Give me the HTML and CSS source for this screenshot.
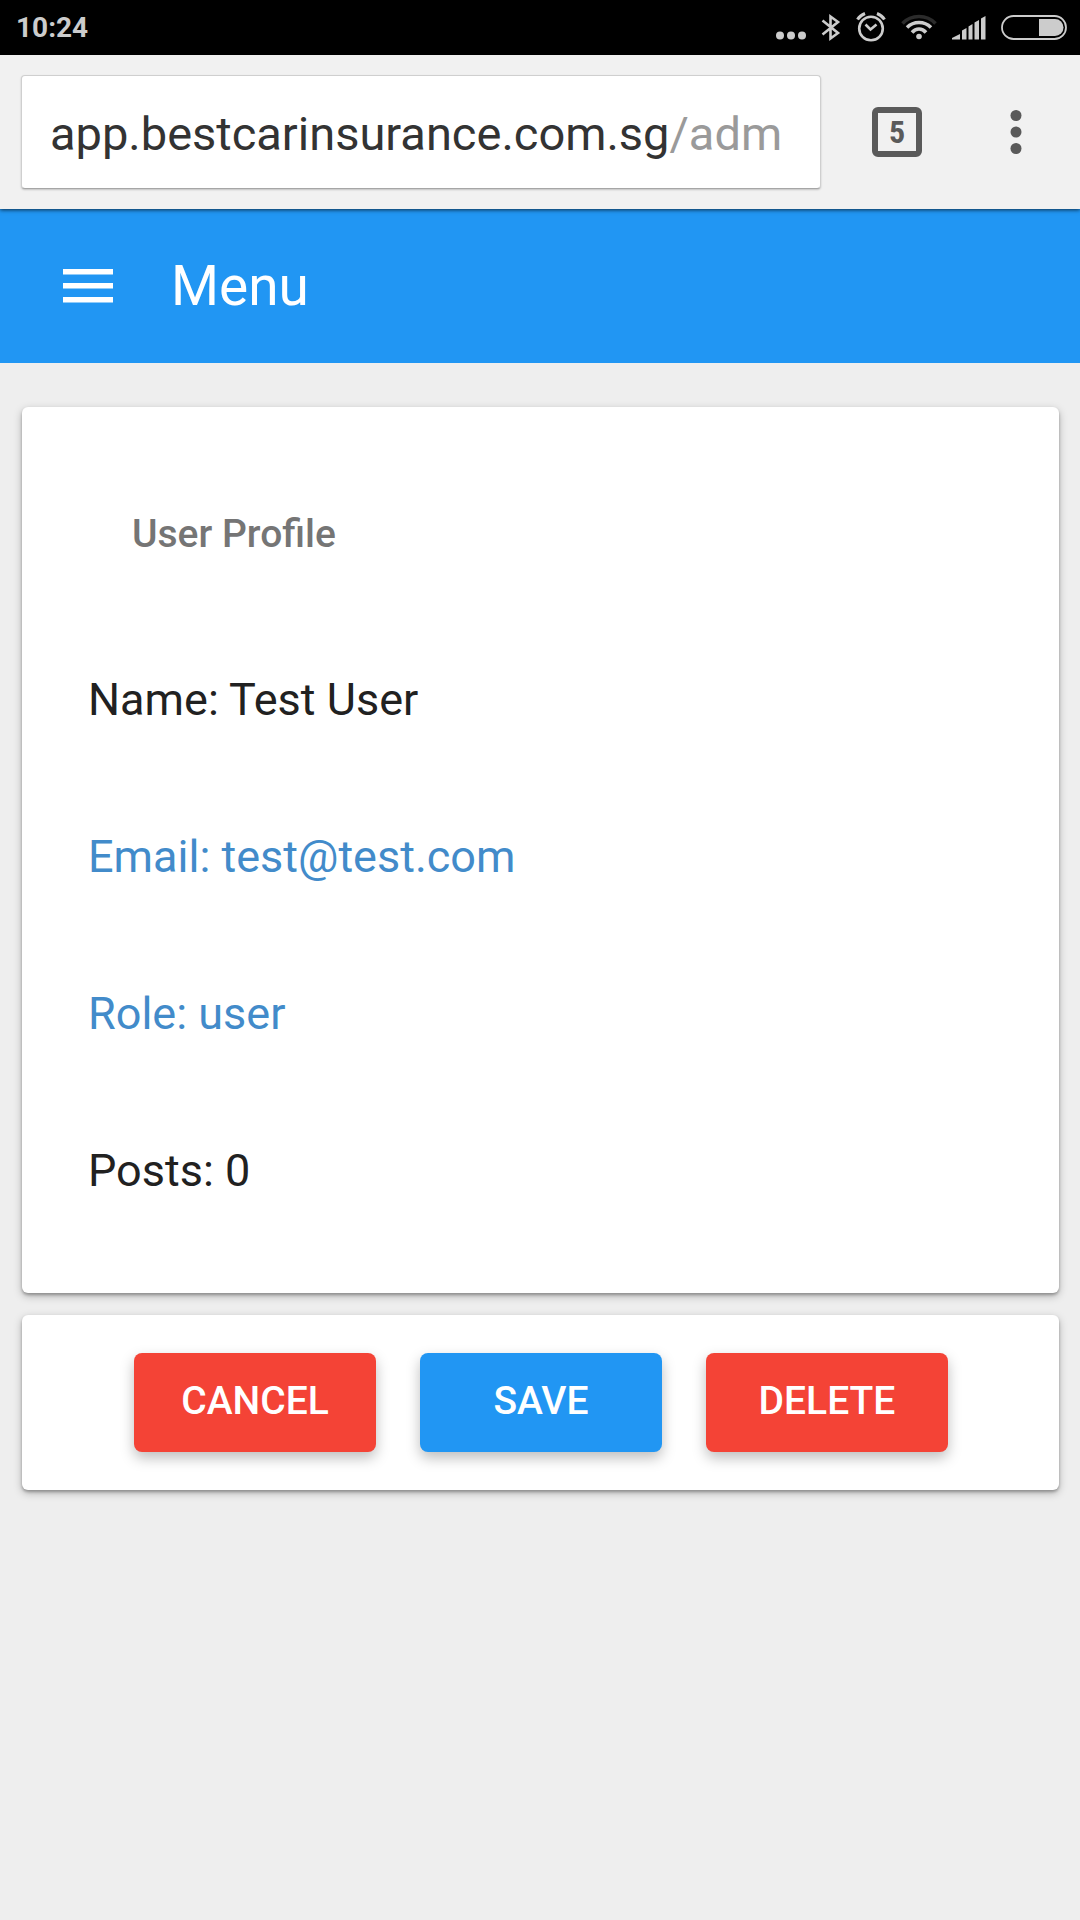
FILE: index.html
```html
<!DOCTYPE html>
<html lang="en">
<head>
<meta charset="utf-8">
<meta name="viewport" content="width=device-width, initial-scale=1">
<title>User Profile</title>
<link rel="stylesheet" href="styles.css">
</head>
<body>
<div class="status">
  <time class="clock">10:24</time>
  <div class="status-icons">
    <svg width="30" height="55" viewBox="0 0 30 55" fill="currentColor" aria-hidden="true"><circle cx="4" cy="35.5" r="4"/><circle cx="15" cy="35.5" r="4"/><circle cx="26" cy="35.5" r="4"/></svg>
    <svg width="20" height="55" viewBox="0 0 20 55" fill="none" stroke="currentColor" stroke-width="2.6" aria-hidden="true"><path d="M1.5 20.500 17 33 9.500 38.500V16.500L17 22 1.500 34.500"/></svg>
    <svg width="30" height="55" viewBox="0 0 30 55" fill="none" stroke="currentColor" aria-hidden="true"><circle cx="15" cy="28.500" r="11.800" stroke-width="2.600"/><path stroke-width="2.600" d="M9.500 24.500 14.500 29.500 20.500 24.500"/><path stroke-width="3" d="M1.500 19.500Q4 15.500 9 13.500M28.500 19.500Q26 15.500 21 13.500"/></svg>
    <svg width="36" height="55" viewBox="0 0 36 55" fill="none" stroke="currentColor" stroke-width="3.500" aria-hidden="true"><path stroke="#2b2b2b" d="M1.500 23.500Q8 16.500 18 16.500T34.500 23.500"/><path d="M6 27.500Q11 22.500 18 22.500T30 27.500M11 32.500Q14 29 18 29T25 32.500"/><circle cx="18" cy="36.500" r="2.800" fill="currentColor" stroke="none"/></svg>
    <svg width="34" height="55" viewBox="0 0 34 55" fill="currentColor" aria-hidden="true"><path d="M0 39.500V38L8 34V39.500ZM10 39.500V30.500L14.500 28V39.500ZM16.500 39.500V26.500L20.500 24V39.500ZM22.500 39.500V22.500L27 20V39.500ZM29 39.500V18.500L33.500 16V39.500Z"/></svg>
    <svg width="66" height="55" viewBox="0 0 66 55" aria-hidden="true"><rect x="1" y="16" width="64" height="23" rx="11.500" fill="none" stroke="currentColor" stroke-width="1.800"/><path fill="currentColor" d="M38 19H54A8.500 8.500 0 0 1 54 36H38Z"/></svg>
  </div>
</div>

<div class="browser-bar">
  <label class="address">
    <input class="host" type="text" aria-label="Address" value="app.bestcarinsurance.com.sg"><span class="path">/adm</span>
  </label>
  <div class="browser-actions">
    <button class="tabs" type="button" aria-label="Open tabs">5</button>
    <button class="more" type="button" aria-label="More options">
      <svg width="12" height="44" viewBox="0 0 12 44" fill="currentColor"><circle cx="6" cy="5.500" r="5.500"/><circle cx="6" cy="22" r="5.500"/><circle cx="6" cy="38.500" r="5.500"/></svg>
    </button>
  </div>
</div>

<header class="toolbar">
  <button class="menu-button" type="button" aria-label="Toggle menu">
    <svg width="50" height="34" viewBox="0 0 50 34" fill="currentColor"><path d="M0 0H50V5.500H0ZM0 14H50V19.500H0ZM0 28H50V33.500H0Z"/></svg>
  </button>
  <h1 class="toolbar-title">Menu</h1>
</header>

<main class="content">
  <section class="card profile">
    <h2 class="subheader">User Profile</h2>
    <ul class="list">
      <li class="item">Name: Test User</li>
      <li class="item"><a class="link" href="#email">Email: test@test.com</a></li>
      <li class="item"><a class="link" href="#role">Role: user</a></li>
      <li class="item">Posts: 0</li>
    </ul>
  </section>
  <section class="card actions">
    <button class="btn warn" type="button">CANCEL</button>
    <button class="btn primary" type="button">SAVE</button>
    <button class="btn warn" type="button">DELETE</button>
  </section>
</main>
</body>
</html>
```
FILE: styles.css
```css
* {
  box-sizing: border-box;
}

body {
  margin: 0;
  min-height: 100vh;
  background: #eeeeee;
  color: #212121;
  font-family: Roboto, "Liberation Sans", sans-serif;
}

button,
input {
  margin: 0;
  padding: 0;
  border: 0;
  background: none;
  color: inherit;
  font: inherit;
}

svg {
  display: block;
}

/* Phone status bar */
.status {
  display: flex;
  align-items: center;
  justify-content: space-between;
  height: 55px;
  padding: 0 13px 0 16px;
  background: #000;
  color: #cccccc;
}

.clock {
  font-size: 28px;
  font-weight: 700;
}

.status-icons {
  display: flex;
  gap: 15px;
}

/* Browser address bar */
.browser-bar {
  position: relative;
  display: flex;
  align-items: center;
  height: 154px;
  padding: 0 58px 0 21px;
  background: #f1f1f1;
  box-shadow: 0 1px 4px rgba(0, 0, 0, 0.7);
}

.address {
  display: flex;
  flex: 1;
  align-items: center;
  height: 114px;
  padding: 2px 28px 0;
  overflow: hidden;
  border: 1px solid #cfcfcf;
  border-bottom-color: #a6a6a6;
  border-radius: 4px;
  background: #fff;
  box-shadow: 0 1px 2px rgba(0, 0, 0, 0.2);
  font-size: 47px;
}

.host {
  field-sizing: content;
  color: #333333;
}

.path {
  color: #9a9a9a;
}

.browser-actions {
  display: flex;
  align-items: center;
  gap: 88px;
  margin-left: 51px;
  color: #5a5a5a;
}

.tabs {
  width: 50px;
  height: 50px;
  border: 6px solid;
  border-radius: 6px;
  font-family: "Roboto Condensed", Roboto, sans-serif;
  font-size: 32px;
  font-weight: 700;
  line-height: 38px;
}

/* Application toolbar */
.toolbar {
  display: flex;
  align-items: center;
  gap: 58px;
  height: 154px;
  padding: 0 63px;
  background: #2196f3;
  color: #fff;
}

.toolbar-title {
  margin: 0;
  font-size: 55px;
  font-weight: 400;
}

/* Cards */
.content {
  display: flex;
  flex-direction: column;
  gap: 22px;
  padding: 44px 21px 44px 22px;
}

.card {
  border-radius: 6px;
  background: #fff;
  box-shadow: 0 3px 8px rgba(0, 0, 0, 0.26), 0 2px 3px rgba(0, 0, 0, 0.26);
}

.profile {
  padding: 44px 66px;
}

.subheader {
  margin: 0;
  padding: 0 44px 4px;
  color: #757575;
  font-size: 39px;
  font-weight: 500;
  line-height: 166px;
}

.list {
  margin: 0;
  padding: 0;
  list-style: none;
  font-size: 45px;
}

.item {
  line-height: 157px;
}

.link {
  color: #428bca;
  text-decoration: none;
}

.actions {
  display: flex;
  justify-content: center;
  gap: 44px;
  padding: 38px 21px 38px 22px;
}

.btn {
  width: 242px;
  height: 99px;
  padding-bottom: 4px;
  border-radius: 8px;
  color: #fff;
  font-size: 39px;
  font-weight: 500;
  box-shadow: 0 6px 14px rgba(0, 0, 0, 0.26);
}

.warn {
  background: #f44336;
}

.primary {
  background: #2196f3;
}
```
